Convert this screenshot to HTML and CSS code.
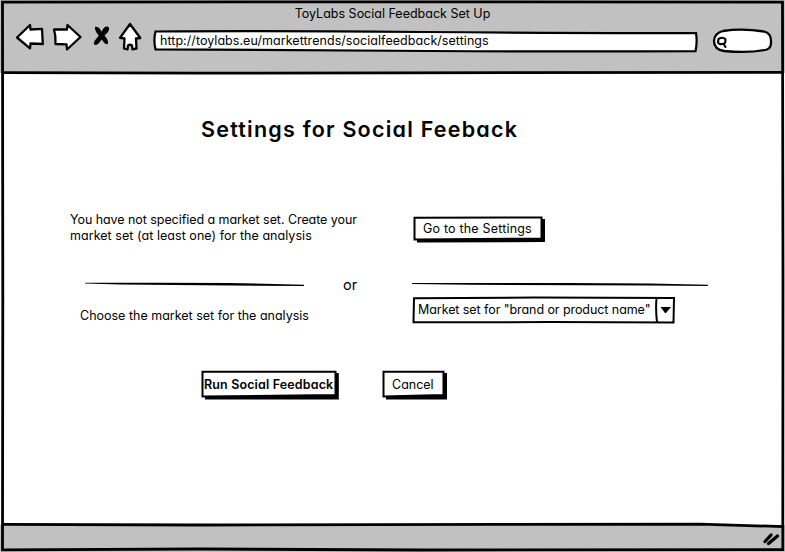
FILE: index.html
```
<!DOCTYPE html>
<html lang="en">
<head>
<meta charset="utf-8">
<title>ToyLabs Social Feedback Set Up</title>
<link rel="stylesheet" href="styles.css">
</head>
<body>
<div class="window">
  <header class="chrome">
    <div class="window-title"><span>ToyLabs Social Feedback Set Up</span></div>
    <div class="toolbar">
      <svg class="nav-icons" width="132" height="34" viewBox="12 20 132 34">
        <g fill="#fff" stroke="#000" stroke-width="2.3" stroke-linejoin="round">
          <path d="M17 37.500 L30 25 L30.500 29.500 L42 28.800 L42.800 44 L30.500 43.500 L30 48.300 Z"/>
          <path d="M54 29.500 L67 29.500 L67.500 25 L80.500 37 L67 49.500 L66.500 44.300 L55.500 44 Q56 36 54 29.500 Z"/>
          <path d="M130 24 L120 37.800 L124.500 38.500 L124 48.500 L127.500 49.300 L128 45.500 Q130 44 132 45.500 L132.500 49.300 L136.500 48.500 L136 38.500 L140.300 38 Z"/>
        </g>
        <path d="M95 26.800 Q99 26 101.500 31.800 Q104 26 107.500 26.500 Q109.500 27 109 30 Q108.500 32 104.500 35.500 Q108.500 40 108 43.500 Q106 46 101.800 39.500 Q97.500 45.500 95 45 Q93 44 94.500 41 L98.800 35.500 Q94.500 31 95 26.800 Z"/>
      </svg>
      <div class="address">
        <svg class="sketch" width="548" height="24" viewBox="152 29 548 24"><path d="M155.500 31.500 Q270 30.700 420 32 T696 33 Q697.500 42 695.500 51.200 Q560 51.800 430 51 T155.500 49.300 Q153.300 40 155.500 31.500 Z" fill="#fff" stroke="#000" stroke-width="2.200"/></svg>
        <span>http://toylabs.eu/markettrends/socialfeedback/settings</span>
      </div>
      <svg class="search" width="62" height="28" viewBox="711 27 62 28">
        <path d="M723 31 Q742 28 764 31.500 Q771 33 771 41 Q771.500 48 767 49.500 Q749 53.500 724 51 Q714 49.500 714 41 Q714.500 33 723 31 Z" fill="#fff" stroke="#000" stroke-width="2.300"/>
        <path d="M718.500 39 Q722.500 36.500 725.300 39 Q726 43.500 723.500 43.800 Q718.500 45 718 42 Z M723.500 44 L725.500 47" fill="none" stroke="#000" stroke-width="2.100" stroke-linecap="round"/>
      </svg>
    </div>
  </header>

  <main class="page">
    <h1><span>Settings for Social Feeback</span></h1>

    <section class="row row-create">
      <p class="intro"><span class="line-first">You have not specified a market set. Create your</span><br><span class="line-second">market set (at least one) for the analysis</span></p>
      <button class="btn btn-settings">
        <svg class="sketch" width="134" height="28" viewBox="412 215 134 28"><path d="M417 239 V242.500 L545 242 V219 H541 V238 Z"/><path d="M414.500 217.800 L541.500 217.500 L541.500 238.500 L414.500 239.500 Z" fill="#fff" stroke="#000" stroke-width="2"/></svg>
        <span>Go to the Settings</span>
      </button>
    </section>

    <section class="row row-or">
      <svg class="rule-left" width="220" height="5" viewBox="85 282 220 5"><path d="M85 282.800 L160 282.800 L230 283 L304 284.700 V286 L230 285.500 L120 284.600 L85 283.600 Z"/></svg>
      <span class="or">or</span>
      <svg class="rule-right" width="296" height="5" viewBox="412 282 296 5"><path d="M412 283 L570 283 L650 283.600 L708 284.700 V286 L650 285.500 L470 284.800 L412 283.900 Z"/></svg>
    </section>

    <section class="row row-choose">
      <p class="choose"><span>Choose the market set for the analysis</span></p>
      <div class="select">
        <svg class="sketch" width="264" height="28" viewBox="412 296.500 264 28"><path d="M414 298.700 L535 298 L674 298.500 L673.500 323 L550 322.600 L413.500 322.800 Z M656.500 298.500 Q655.500 311 657 322.500" fill="#fff" stroke="#000" stroke-width="2"/><path d="M660.500 307.500 H671 L666 313.500 H665 Z"/></svg>
        <span>Market set for "brand or product name"</span>
      </div>
    </section>

    <section class="actions">
      <button class="btn btn-run">
        <svg class="sketch" width="139" height="30" viewBox="200 370 139 30"><path d="M205 396 V399.500 H338.800 V373 H335 V395 Z"/><path d="M202.500 371.800 L335.500 371.800 L335.500 395 L202.500 396.500 Z" fill="#fff" stroke="#000" stroke-width="2"/></svg>
        <span>Run Social Feedback</span>
      </button>
      <button class="btn btn-cancel">
        <svg class="sketch" width="66" height="30" viewBox="381 370 66 30"><path d="M386 396 V399.500 H447 V373 H443 V395 Z"/><path d="M383.500 371.800 L443.500 371.800 L443.500 395 L383.500 396.500 Z" fill="#fff" stroke="#000" stroke-width="2"/></svg>
        <span>Cancel</span>
      </button>
    </section>
  </main>

  <footer class="status">
    <svg width="20" height="16" viewBox="761 532 20 16"><path d="M765 541.500 L771 535 M768.500 543.500 L777.500 536" stroke="#000" stroke-width="3.300" stroke-linecap="round"/></svg>
  </footer>

  <svg class="frame" width="785" height="552" viewBox="0 0 785 552" fill="none" stroke="#000" stroke-width="2.800">
    <path d="M2.500 2.200 L400 1.800 L782.500 2.200 L783 280 L782.800 549.500 L420 550 L200 549 L2.500 549.800 L2.800 300 Z"/>
    <path d="M2 72.600 L200 73.200 L400 72.800 L784 72.400"/>
    <path d="M2 524.300 L200 525 L500 524.300 L700 524.200 L784 526.600"/>
  </svg>
</div>
</body>
</html>
```
FILE: styles.css
```
* { box-sizing: border-box; }
body {
  margin: 0;
  background: #fff;
  color: #000;
  font: 12.5px/16px Inter, "Open Sans", sans-serif;
  font-feature-settings: "cv11";
}
.window {
  position: relative;
  width: 785px;
  height: 552px;
  overflow: hidden;
  display: flex;
  flex-direction: column;
}
.frame { position: absolute; inset: 0; pointer-events: none; }
.chrome { height: 73px; background: #c1c1c1; padding-top: 6px; }
.window-title { text-align: center; height: 15px; }
.toolbar { display: flex; align-items: flex-start; padding-left: 12px; }
.nav-icons { margin-top: -1px; flex: none; }
.address {
  position: relative;
  width: 548px;
  height: 24px;
  margin: 8px 11px 0 8px;
  padding: 4px 0 0 8px;
  letter-spacing: 0.05px;
}
.search { margin-top: 6px; flex: none; }
.sketch { position: absolute; left: 0; top: 0; }
.address span, .btn span, .select span { position: relative; }
span { white-space: nowrap; }

.page { flex: 1; }
h1 {
  margin: 42px 0 0 201px;
  font-size: 21.5px;
  line-height: 28px;
  font-weight: 600;
  letter-spacing: 1.22px;
}
p { margin: 0; }
.row { display: flex; align-items: flex-start; }
.row-create { margin-top: 69px; padding-left: 70px; }
.intro { width: 342px; }
.line-first { letter-spacing: -0.06px; }
.line-second { letter-spacing: 0.05px; }
.btn {
  position: relative;
  border: 0;
  padding: 0;
  background: none;
  color: inherit;
  font: inherit;
  font-feature-settings: inherit;
  text-align: left;
}
.btn-settings { width: 134px; height: 28px; margin-top: 3px; padding-left: 11px; letter-spacing: 0.19px; }
.row-or { height: 22px; margin-top: 30px; padding-left: 85px; }
.rule-left, .rule-right { margin-top: 8px; flex: none; }
.or { width: 69px; margin-left: 38px; font-size: 14.5px; line-height: 22px; }
.row-choose { padding-left: 80px; height: 28px; }
.choose { width: 332px; padding-top: 12px; }
.select { position: relative; width: 264px; height: 28px; padding: 6px 0 0 6px; letter-spacing: -0.07px; }
.actions { display: flex; gap: 42px; margin-top: 46px; padding-left: 200px; }
.btn-run { width: 139px; height: 30px; padding-left: 4px; font-weight: 600; letter-spacing: 0.14px; }
.btn-cancel { width: 66px; height: 30px; padding-left: 11px; }
.status {
  height: 27px;
  background: #c1c1c1;
  display: flex;
  justify-content: flex-end;
  padding: 7px 4px 0 0;
}
```
